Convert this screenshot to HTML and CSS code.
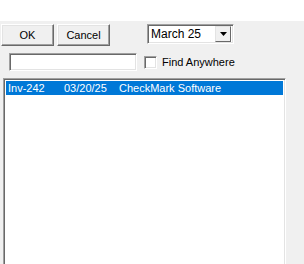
FILE: index.html
```html
<!DOCTYPE html>
<html lang="en">
<head>
    <meta charset="UTF-8">
    <title>Find Invoice</title>
    <link rel="stylesheet" href="styles.css">
</head>
<body>

<div class="topstrip"></div>
<div class="dialog">
    <div class="toolbar">
        <button class="btn btn-ok">OK</button>
        <button class="btn btn-cancel">Cancel</button>
        <div class="combo">
            <span class="combo-text">March 25</span>
            <span class="combo-arrow">
                <svg width="7" height="4" viewBox="0 0 7 4"><path d="M0 0h7L3.5 4z" fill="#000"/></svg>
            </span>
        </div>
    </div>
    <div class="findrow">
        <div class="field"></div>
        <label class="check"><span class="box"></span>Find Anywhere</label>
    </div>
    <div class="listbox">
        <div class="row selected">
            <span class="col-id">Inv-242</span>
            <span class="col-date">03/20/25</span>
            <span class="col-name">CheckMark Software</span>
        </div>
    </div>
</div>

</body>
</html>
```

FILE: styles.css
```css
body, html {
    margin:0;
    padding:0;
    background:#fff;
    font-family:"Liberation Sans", Arial, sans-serif;
    font-size:11px;
    color:#000;
}
.topstrip {
    height:21px;
    background:#fff;
}
.dialog {
    height:243px;
    background:#f0f0f0;
    padding:0 0 0 1px;
    overflow:hidden;
}
.toolbar {
    display:flex;
    align-items:flex-start;
    padding-top:3px;
    height:22px;
}
.btn {
    box-sizing:border-box;
    height:22px;
    margin:0;
    padding:0;
    font:inherit;
    background:#f0f0f0;
    border:1px solid;
    border-color:#fff #696969 #696969 #fff;
    box-shadow:inset -1px -1px 0 #a0a0a0, inset 1px 1px 0 #e3e3e3;
}
.btn-ok {
    width:53px;
}
.btn-cancel {
    width:53px;
    margin-left:3px;
}
.combo {
    box-sizing:border-box;
    display:flex;
    align-items:center;
    width:87px;
    height:20px;
    margin-left:37px;
    background:#fff;
    border:1px solid;
    border-color:#a0a0a0 #fff #fff #a0a0a0;
    box-shadow:inset 1px 1px 0 #696969, inset -1px -1px 0 #e3e3e3;
    padding-left:3px;
    font-size:12px;
}
.combo-text {
    flex:1;
}
.combo-arrow {
    box-sizing:border-box;
    display:flex;
    align-items:center;
    justify-content:center;
    width:16px;
    height:16px;
    margin-right:2px;
    background:#f0f0f0;
    border:1px solid;
    border-color:#e3e3e3 #696969 #696969 #e3e3e3;
}
.findrow {
    display:flex;
    align-items:center;
    margin-top:7px;
    height:18px;
}
.field {
    box-sizing:border-box;
    width:128px;
    height:18px;
    margin-left:8px;
    background:#fff;
    border:1px solid;
    border-color:#a0a0a0 #fff #fff #a0a0a0;
    box-shadow:inset 1px 1px 0 #696969, inset -1px -1px 0 #e3e3e3;
}
.check {
    display:flex;
    align-items:center;
    margin-left:7px;
}
.box {
    box-sizing:border-box;
    width:13px;
    height:13px;
    margin-right:5px;
    background:#fff;
    border:1px solid;
    border-color:#a0a0a0 #fff #fff #a0a0a0;
    box-shadow:inset 1px 1px 0 #696969, inset -1px -1px 0 #e3e3e3;
}
.listbox {
    box-sizing:border-box;
    width:283px;
    height:200px;
    margin:7px 0 0 2px;
    background:#fff;
    border:1px solid;
    border-color:#a0a0a0 #fff #fff #a0a0a0;
    box-shadow:inset 1px 1px 0 #696969, inset -1px -1px 0 #e3e3e3;
    padding:2px 2px 0 2px;
}
.row {
    display:flex;
    height:14px;
    line-height:14px;
    padding-left:2px;
}
.row.selected {
    background:#0078d7;
    color:#fff;
}
.col-id {
    width:56px;
}
.col-date {
    width:55px;
}
```
